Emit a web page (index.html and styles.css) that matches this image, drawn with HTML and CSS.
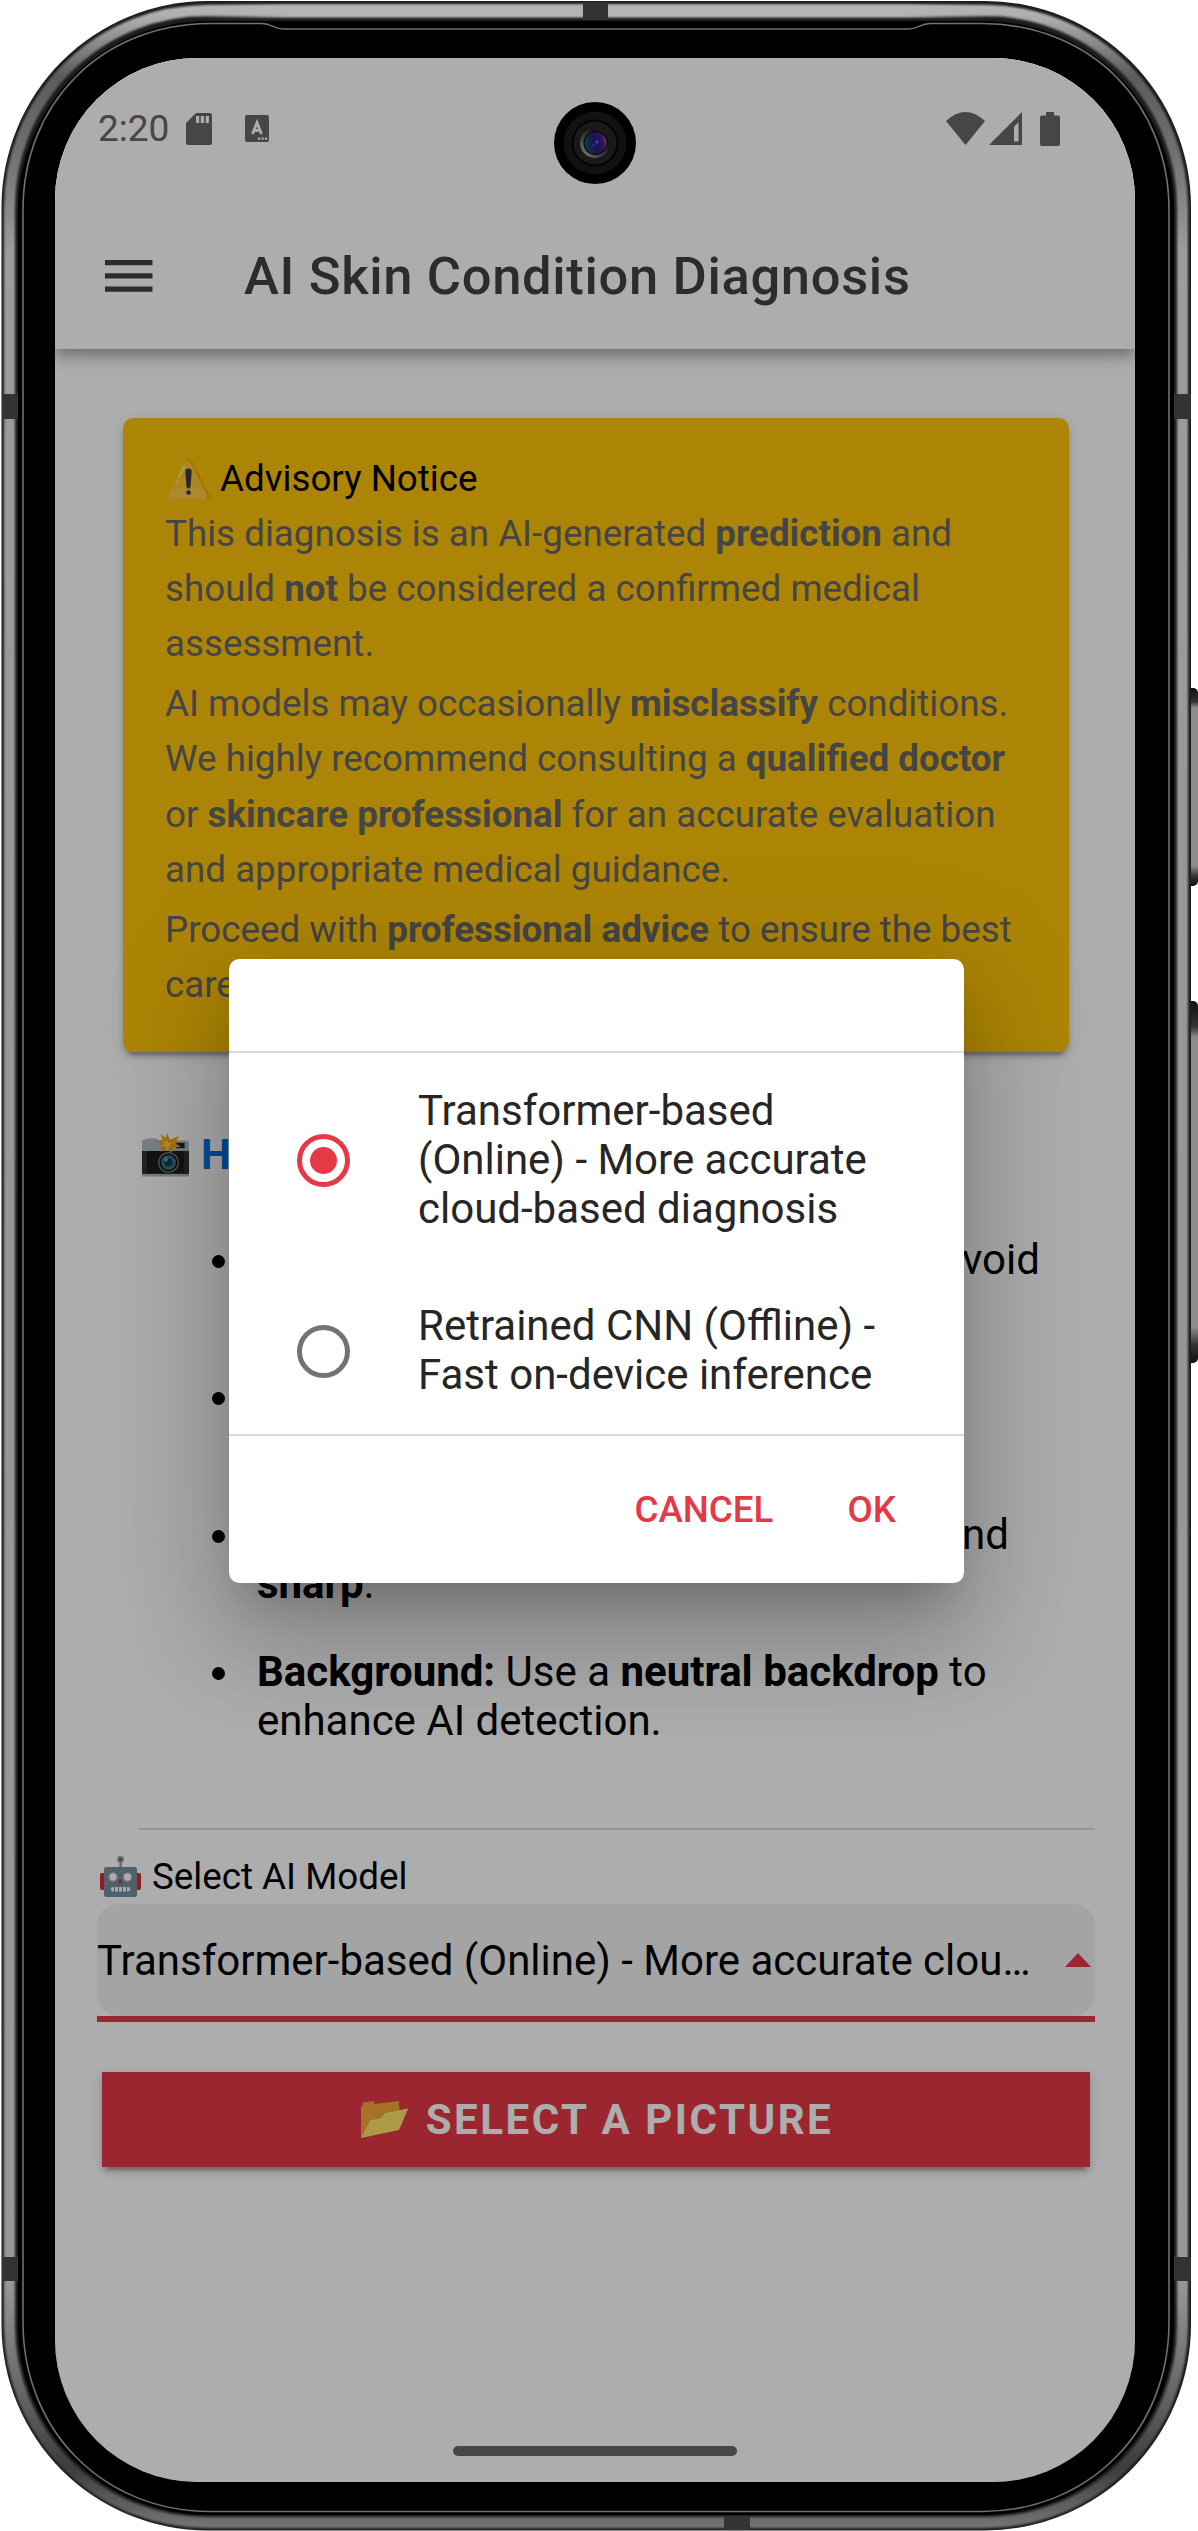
FILE: index.html
```html
<!DOCTYPE html>
<html lang="en">
<head>
<meta charset="utf-8">
<title>AI Skin Condition Diagnosis</title>
<link rel="stylesheet" href="styles.css">
</head>
<body>
<div class="phone">
  <svg class="frame" viewBox="0 0 1198 2531" aria-hidden="true">
    <defs>
      <linearGradient id="metal" gradientUnits="userSpaceOnUse" x1="0" y1="0" x2="0" y2="2531">
        <stop offset="0" stop-color="#bbb"/><stop offset=".008" stop-color="#aaa"/><stop offset=".03" stop-color="#5c5c5c"/>
        <stop offset=".06" stop-color="#707070"/><stop offset=".1" stop-color="#9d9d9d"/><stop offset=".5" stop-color="#969696"/><stop offset=".9" stop-color="#999"/>
        <stop offset=".945" stop-color="#666"/><stop offset=".975" stop-color="#3c3c3c"/><stop offset=".99" stop-color="#606060"/><stop offset="1" stop-color="#777"/>
      </linearGradient>
      <linearGradient id="topband" gradientUnits="userSpaceOnUse" x1="190" y1="0" x2="1002" y2="0">
        <stop offset="0" stop-color="#b4b4b4" stop-opacity="0"/><stop offset=".12" stop-color="#b4b4b4"/><stop offset=".88" stop-color="#b4b4b4"/><stop offset="1" stop-color="#b4b4b4" stop-opacity="0"/>
      </linearGradient>
      <linearGradient id="key" x1="0" y1="0" x2="0" y2="1">
        <stop offset="0" stop-color="#111"/><stop offset=".07" stop-color="#333"/><stop offset=".1" stop-color="#8c8c8c"/>
        <stop offset=".9" stop-color="#8c8c8c"/><stop offset=".95" stop-color="#333"/><stop offset="1" stop-color="#111"/>
      </linearGradient>
      <filter id="soft" filterUnits="userSpaceOnUse" x="0" y="0" width="1198" height="2531"><feGaussianBlur stdDeviation="1.3"/></filter>
    </defs>
    <rect x="1186" y="688" width="12" height="198" rx="5" fill="url(#key)"/>
    <rect x="1186" y="1001" width="12" height="362" rx="5" fill="url(#key)"/>
    <rect x="1.5" y="1" width="1189.5" height="2529.5" rx="206" fill="#1c1c1c"/>
    <rect x="9.5" y="10.5" width="1173" height="2512" rx="197" fill="none" stroke="url(#metal)" stroke-width="11" filter="url(#soft)"/>
    <path d="M190 11H1002" stroke="url(#topband)" stroke-width="13" filter="url(#soft)"/>
    <rect x="18" y="21" width="1156" height="2494" rx="189" fill="#000"/>
    <path d="M23 210C23 105 100 24 210 23.500H262C273 23.500 272 29 284 29H908C920 29 919 23.500 930 23.500H982C1092 24 1169 105 1169 210V2322C1169 2430 1090 2511 982 2511.500H210C102 2511 23 2430 23 2322Z" fill="#000" stroke="#707070" stroke-width="1.600"/>
    <g fill="#333"><path d="M2 394h16v25H2zM1174 394h17v25h-17zM583 2h25v18h-25zM2 2257h16v24H2zM1174 2257h17v24h-17zM724 2516h26v14h-26z"/></g>
  </svg>

  <div class="screen">
    <div class="status">
      <span class="clock">2:20</span>
      <svg class="sd" width="26" height="32" viewBox="0 0 26 32"><path fill="#686868" d="M10 0h14a2 2 0 0 1 2 2v28a2 2 0 0 1-2 2H2a2 2 0 0 1-2-2V10z"/><path fill="#fff" d="M10 3h3.200v7H10zM14.800 3H18v7h-3.200zM19.700 3h3.200v7h-3.200z"/></svg>
      <svg class="kbd" width="24" height="27" viewBox="0 0 24 27"><rect width="24" height="27" rx="2" fill="#686868"/><path d="M7.500 19L12 7.500 16.500 19M9 15.500h6" fill="none" stroke="#fff" stroke-width="2.800"/><path d="M13 22.500h2.200v2.200H13zM16.500 22.500h2.200v2.200h-2.200zM20 22.500h2.200v2.200H20z" fill="#fff"/></svg>
      <span class="grow"></span>
      <svg width="39" height="33" viewBox="0 0 39 33"><path d="M0 9Q19.500-9 39 9L19.500 33z" fill="#686868"/></svg>
      <svg class="signal" width="33" height="33" viewBox="0 0 33 33"><path d="M33 0v33H0zM29.500 10L25 15v14.500h4.500z" fill="#686868" fill-rule="evenodd"/></svg>
      <svg class="battery" width="20" height="34" viewBox="0 0 20 34"><path d="M6 0h8v3.500h4a2 2 0 0 1 2 2V32a2 2 0 0 1-2 2H2a2 2 0 0 1-2-2V5.500a2 2 0 0 1 2-2h4z" fill="#686868"/></svg>
    </div>
    <header class="toolbar">
      <svg width="48" height="32" viewBox="0 0 48 32"><path d="M0 0h47.500v5.300H0zM0 13.200h47.500v5.300H0zM0 26.400h47.500v5.300H0z" fill="#424242"/></svg>
      <h1>AI Skin Condition Diagnosis</h1>
    </header>

    <main class="content">
      <section class="card">
        <h2><svg class="warn" width="43" height="42" viewBox="0 0 43 42"><path d="M18.500 3Q21.500-1.500 25 3L42.500 37Q43.500 41 39.500 41H32z" fill="#f5a800"/><path d="M17.500 5Q20.500 0 23.500 4L39.500 36.500Q40.500 40.500 37 40.500H5Q1 40.500 2.500 36z" fill="#fdc72e"/><path d="M5 31h32l2.500 5.500q1 4-2.500 4H5q-4 0-2.500-4.500z" fill="#fbcb48"/><path d="M17.500 8L11.500 19.500M10 23.500l-.5 1" stroke="#fbe36e" stroke-width="2.200" stroke-linecap="round"/><path d="M21.500 10.500q3.500 0 3.200 3.500l-1.200 15q-2 3-4 0L18.300 14q-.3-3.500 3.200-3.500z" fill="#3c3c46"/><circle cx="21.500" cy="34.500" r="2.300" fill="#3c3c46"/></svg>Advisory Notice</h2>
        <p>This diagnosis is an AI-generated <b>prediction</b> and<br>should <b>not</b> be considered a confirmed medical<br>assessment.</p>
        <p>AI models may occasionally <b>misclassify</b> conditions.<br>We highly recommend consulting a <b>qualified doctor</b><br>or <b>skincare professional</b> for an accurate evaluation<br>and appropriate medical guidance.</p>
        <p>Proceed with <b>professional advice</b> to ensure the best<br>care.</p>
      </section>

      <h3><svg class="cam" width="47" height="44" viewBox="0 0 47 44"><path d="M1 7l5-1.500 8 0 3 2H45q2 0 2 2V42H0V8z" fill="#b0bec5"/><path d="M0 18h47v24H0z" fill="#333"/><path d="M5 18h37v22H5z" fill="#1c1c1c"/><path d="M0 41h47v2.500H0z" fill="#a9b8bd"/><rect x="34" y="9.500" width="9" height="6" fill="#212121" stroke="#90a4ae"/><path d="M25 0l3 7 9-4-4 7 6 4-8 0-2 6-4-5-7 4 2-7-7-4 8-1-3-6 6 4z" fill="#ffa000"/><path d="M25 5l1 5 5-1-3 3-2 5-3-4-4 1 3-4-2-3 4 2z" fill="#ffd740"/><circle cx="26.500" cy="29.500" r="10.500" fill="#777"/><circle cx="26.500" cy="29.500" r="9" fill="#111"/><circle cx="26.500" cy="29.500" r="7.500" fill="#30788a"/><circle cx="26.500" cy="29.500" r="4" fill="#193f50"/><circle cx="24" cy="26.500" r="2" fill="#65aab6"/></svg>How to Take a Good Photo</h3>

      <ul class="tips">
        <li><span class="line light"><b>Lighting:</b> Use <b>natural light</b> and avoid</span><br>harsh shadows.</li>
        <li><b>Distance:</b> Keep the camera<br>close to the skin.</li>
        <li><span class="line focus"><b>Focus:</b> Make sure it is <b>clear</b> and</span><br><b>sharp</b>.</li>
        <li><b>Background:</b> Use a <b>neutral backdrop</b> to<br>enhance AI detection.</li>
      </ul>
      <hr class="rule">

      <div class="label"><svg width="41" height="41" viewBox="0 0 41 41"><path d="M19.500 5h2v7h-2z" fill="#78909c"/><circle cx="20.500" cy="3.500" r="3.400" fill="#90a4ae"/><circle cx="20.500" cy="3.500" r="1.800" fill="#e53935"/><path d="M0 19q0-2 2-2h3v17H2q-2 0-2-2zM41 19q0-2-2-2h-3v17h3q2 0 2-2z" fill="#d32f2f"/><rect x="4" y="11" width="33" height="30" rx="2.500" fill="#7890a0"/><circle cx="13" cy="21" r="4.500" fill="#b9c5c9"/><circle cx="27.500" cy="21" r="4.500" fill="#b9c5c9"/><circle cx="13" cy="21" r="3.400" fill="#fff"/><circle cx="27.500" cy="21" r="3.400" fill="#fff"/><path d="M20.300 23l2.500 4.500h-5z" fill="#d32f2f"/><rect x="11" y="31" width="19" height="4.500" rx="2" fill="#fff"/><path d="M14.500 31v4.500M18.500 31v4.500M22.500 31v4.500M26.500 31v4.500" stroke="#607d8b" stroke-width="1"/></svg>Select AI Model</div>
      <div class="select">
        <div class="select-field"><span>Transformer-based (Online) - More accurate clou…</span><svg width="26" height="14" viewBox="0 0 26 14"><path d="M13 0l13 14H0z" fill="#e63946"/></svg></div>
      </div>
      <div class="action"><svg width="47" height="37" viewBox="0 0 47 37"><path d="M0 6L2 4V1.500L12 0l2 3L38 0l1 25L0 37z" fill="#f5a83a"/><path d="M0 37L9 20l11-2 4-5L47 8 38 29z" fill="#ffe36a"/><path d="M9 20l11-2 4-5L47 8" fill="none" stroke="#fff59d"/></svg>SELECT A PICTURE</div>
    </main>
    <div class="home"></div>
    <div class="backdrop">
      <div class="dialog">
        <div class="dialog-head"></div>
        <div class="option first"><i class="radio on"></i><span>Transformer-based<br>(Online) - More accurate<br>cloud-based diagnosis</span></div>
        <div class="option"><i class="radio"></i><span>Retrained CNN (Offline) -<br>Fast on-device inference</span></div>
        <div class="buttons"><span>CANCEL</span><span>OK</span></div>
      </div>
    </div>
    <svg class="lens" width="82" height="82" viewBox="0 0 82 82">
      <defs>
        <linearGradient id="rim" x1="0" y1="1" x2="1" y2="0"><stop offset="0" stop-color="#888"/><stop offset=".35" stop-color="#444"/><stop offset=".7" stop-color="#161616"/><stop offset="1" stop-color="#222"/></linearGradient>
        <linearGradient id="glass" x1="0" y1=".5" x2="1" y2=".3"><stop offset="0" stop-color="#17353f"/><stop offset=".45" stop-color="#151552"/><stop offset=".8" stop-color="#35134c"/><stop offset="1" stop-color="#6f3b78"/></linearGradient>
      </defs>
      <circle cx="41" cy="41" r="41" fill="#000"/><circle cx="41" cy="41" r="31.500" fill="#111"/><circle cx="41" cy="41" r="23.500" fill="#030303"/><circle cx="41" cy="41" r="21.500" fill="#191919"/>
      <circle cx="41" cy="41" r="15" fill="url(#rim)"/><circle cx="41.500" cy="41" r="12" fill="#050510"/><circle cx="41.500" cy="41" r="11" fill="url(#glass)"/><circle cx="43" cy="40" r="1.700" fill="#4136d8"/><circle cx="40" cy="43" r="1.300" fill="#302aae"/>
    </svg>
  </div>
</div>
</body>
</html>
```
FILE: styles.css
```css
* { box-sizing: border-box; }
body { margin: 0; background: #fff; font-family: Roboto, "Liberation Sans", sans-serif; }
h1, h2, h3, p, ul { margin: 0; padding: 0; }
b { font-weight: 700; }
svg { display: block; flex: none; }

.phone { position: relative; width: 1198px; height: 2531px; padding: 58px 63px 49px 55px; }
.frame { position: absolute; inset: 0; width: 1198px; height: 2531px; }
.screen { position: relative; width: 1080px; height: 2424px; background: #fff; border-radius: 142px; overflow: hidden; }

.status { position: relative; z-index: 1; display: flex; align-items: center; height: 144px; padding: 0 75px 3px 43px; background: #fff; }
.clock { font-size: 37px; line-height: 43px; color: #686868; width: 72px; }
.sd { margin-left: 16px; }
.kbd { margin-left: 33px; }
.grow { flex: 1; }
.signal { margin-left: 4px; }
.battery { margin-left: 18px; }

.toolbar { position: relative; display: flex; align-items: center; gap: 91px; height: 147px; padding-left: 50px; background: #fff;
  box-shadow: 0 5px 11px -2px rgba(0,0,0,.2), 0 10px 13px rgba(0,0,0,.14), 0 3px 26px rgba(0,0,0,.12); }
.toolbar h1 { font-size: 52.5px; font-weight: 500; letter-spacing: .0125em; color: #424242; white-space: nowrap; }

.content { padding: 69px 40px 0 42px; }
.card { margin: 0 26px; height: 634px; padding: 33px 42px 40px; border-radius: 10.5px; background: #ffc409; color: #666; font-size: 36.75px; line-height: 55.125px; white-space: nowrap;
  box-shadow: 0 8px 3px -5px rgba(0,0,0,.2), 0 5px 5px rgba(0,0,0,.14), 0 3px 13px rgba(0,0,0,.12); }
.card h2 { display: flex; align-items: center; gap: 10px; padding-left: 2px; font-size: 36.75px; font-weight: 400; color: #000; }
.card p + p { margin-top: 4.8px; }

h3 { display: flex; align-items: center; gap: 12px; margin: 78px 0 56px 45px; font-size: 42px; line-height: 49px; font-weight: 700; color: #0074e8; white-space: nowrap; }
.tips { padding-left: 160px; font-size: 42px; line-height: 49.2px; list-style: none; white-space: nowrap; }
.tips li { display: block; margin-bottom: 38.9px; }
.tips li::before { content: ""; float: left; width: 13px; height: 13px; margin: 20px 0 0 -45px; border-radius: 50%; background: #000; }
.line { display: inline-block; vertical-align: top; text-align-last: justify; }
.light { width: 783px; }
.focus { width: 752px; }
.rule { margin: 83px 0 0 42px; border: 0; height: 2px; background: #dedede; }

.label { display: flex; align-items: center; gap: 11px; margin-top: 25px; padding-left: 3px; font-size: 36.75px; line-height: 43px; }
.select { margin-top: 6px; border-bottom: 6px solid #e63946; }
.select-field { display: flex; align-items: center; justify-content: space-between; height: 112px; padding-right: 4px; border-radius: 21px; background: #f2f2f2; font-size: 42px; white-space: nowrap; }
.action { display: flex; align-items: center; justify-content: center; gap: 18px; height: 95px; margin: 50px 5px 0; padding-left: 2px; background: #e63946; color: #fff; font-size: 42px; font-weight: 700; letter-spacing: .06em;
  box-shadow: 0 8px 3px -5px rgba(0,0,0,.2), 0 5px 5px rgba(0,0,0,.14), 0 3px 13px rgba(0,0,0,.12); }
.home { position: absolute; left: 398px; bottom: 26px; width: 284px; height: 10px; border-radius: 5px; background: #686868; }

.backdrop { position: absolute; z-index: 2; inset: 0; display: flex; align-items: center; justify-content: center; background: rgba(0,0,0,.32); }
.dialog { width: 735px; height: 624px; margin: 2px 0 0 3px; border-radius: 10.5px; background: #fff; overflow: hidden; color: #262626;
  box-shadow: 0 29px 39px -18px rgba(0,0,0,.2), 0 63px 100px 8px rgba(0,0,0,.14), 0 24px 121px 21px rgba(0,0,0,.12); }
.dialog-head { height: 94px; border-bottom: 2px solid #dadada; }
.option { display: flex; align-items: center; gap: 68px; height: 166px; padding-left: 68px; font-size: 42px; line-height: 49.2px; white-space: nowrap; }
.option span { padding-bottom: 2px; }
.option.first { height: 215px; }
.radio { display: grid; place-items: center; flex: none; width: 53px; height: 53px; border: 5px solid #737373; border-radius: 50%; }
.radio.on { border-color: #e63946; }
.radio.on::after { content: ""; width: 27px; height: 27px; border-radius: 50%; background: #e63946; }
.buttons { display: flex; justify-content: flex-end; gap: 74px; height: 149px; padding: 52px 68px 0 0; border-top: 2px solid #dadada; font-size: 36.75px; line-height: 43px; font-weight: 500; color: #e63946; }
.lens { position: absolute; z-index: 3; left: 499px; top: 44px; }
```
